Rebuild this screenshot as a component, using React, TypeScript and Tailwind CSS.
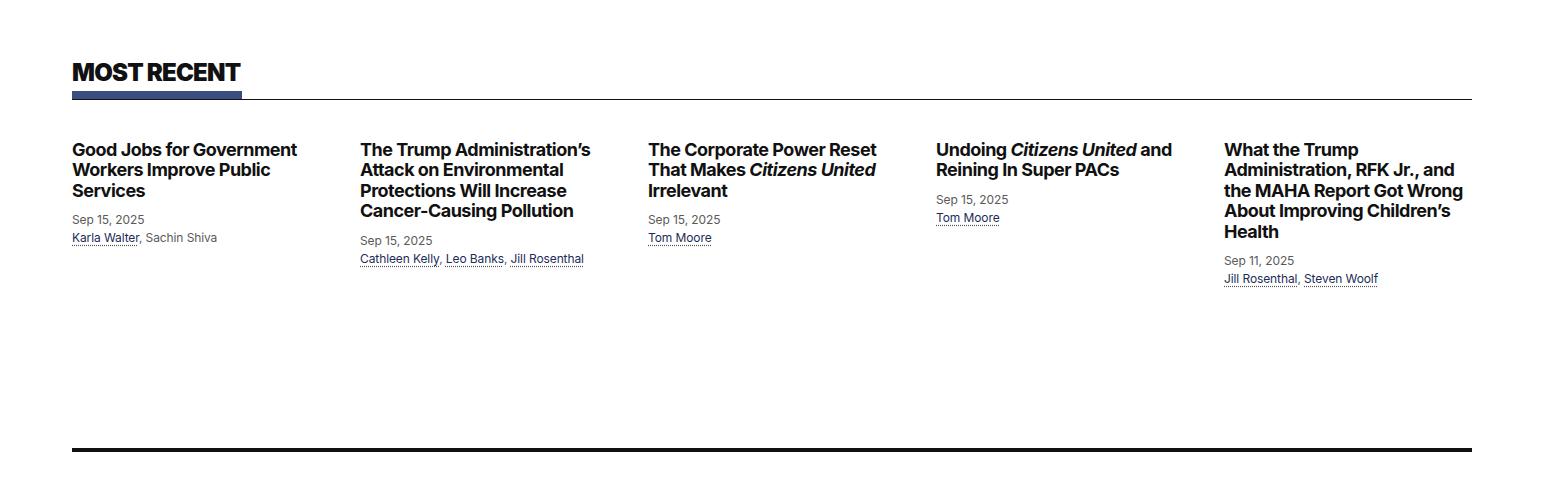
import type { ReactNode } from 'react';

type Author = { name: string; link: boolean };

type Story = {
  title: ReactNode;
  date: string;
  authors: Author[];
};

const stories: Story[] = [
  {
    title: 'Good Jobs for Government Workers Improve Public Services',
    date: 'Sep 15, 2025',
    authors: [
      { name: 'Karla Walter', link: true },
      { name: 'Sachin Shiva', link: false },
    ],
  },
  {
    title: 'The Trump Administration’s Attack on Environmental Protections Will Increase Cancer-Causing Pollution',
    date: 'Sep 15, 2025',
    authors: [
      { name: 'Cathleen Kelly', link: true },
      { name: 'Leo Banks', link: true },
      { name: 'Jill Rosenthal', link: true },
    ],
  },
  {
    title: (
      <>
        The Corporate Power Reset That Makes <em>Citizens United</em> Irrelevant
      </>
    ),
    date: 'Sep 15, 2025',
    authors: [{ name: 'Tom Moore', link: true }],
  },
  {
    title: (
      <>
        Undoing <em>Citizens United</em> and Reining In Super PACs
      </>
    ),
    date: 'Sep 15, 2025',
    authors: [{ name: 'Tom Moore', link: true }],
  },
  {
    title: 'What the Trump Administration, RFK Jr., and the MAHA Report Got Wrong About Improving Children’s Health',
    date: 'Sep 11, 2025',
    authors: [
      { name: 'Jill Rosenthal', link: true },
      { name: 'Steven Woolf', link: true },
    ],
  },
];

const StoryCard = ({ story }: { story: Story }) => (
  <article>
    <h3 className="text-[18px] leading-[20.4px] font-bold tracking-[-0.5px] text-[#111]">
      <a href="#">{story.title}</a>
    </h3>
    <div className="mt-[10px] text-[12px] leading-[18px] tracking-[-0.1px] text-[#5a5a5a]">{story.date}</div>
    <div className="text-[12px] leading-[18px] tracking-[-0.1px] text-[#5a5a5a]">
      {story.authors.map((a, i) => (
        <span key={a.name}>
          {a.link ? (
            <a
              href="#"
              className="text-[#1c2c57] underline decoration-dotted decoration-[#555] underline-offset-[3px]"
            >
              {a.name}
            </a>
          ) : (
            a.name
          )}
          {i < story.authors.length - 1 && ', '}
        </span>
      ))}
    </div>
  </article>
);

export default function App() {
  return (
    <div className="min-h-[480px] bg-white font-['Inter',sans-serif] antialiased">
      <section className="ml-[72px] w-[1400px] pt-[59px]">
        <h2 className="text-[24px] leading-[28px] font-black tracking-[-0.8px] text-[#111]">MOST RECENT</h2>
        <div className="mt-[4px] flex items-end border-b border-[#111]">
          <div className="h-[8px] w-[170px] bg-[#3a4d80]" />
        </div>

        <div className="mt-[40px] grid grid-cols-5 gap-x-[40px]">
          {stories.map((s, i) => (
            <StoryCard key={i} story={s} />
          ))}
        </div>

        <div className="mt-[160px] h-[4px] bg-[#111]" />
      </section>
    </div>
  );
}
